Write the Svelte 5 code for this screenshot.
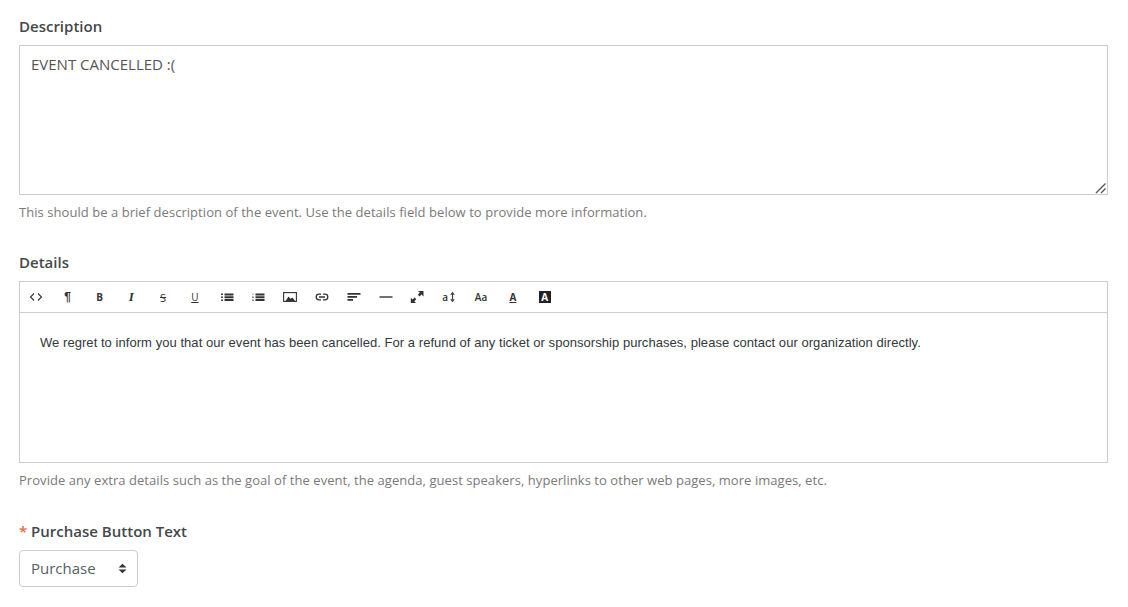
<script lang="ts">
  let description = $state('EVENT CANCELLED :(')
  let buttonText = $state('Purchase')
</script>

<div class="form">
  <section class="field first">
    <label class="label" for="description">Description</label>
    <div class="textarea-wrap">
      <textarea id="description" class="textarea" bind:value={description}></textarea>
      <svg class="grip" width="12" height="12" viewBox="0 0 12 12"><path d="M1 11 10.500 1.500M6 11 10.500 6.500" fill="none" stroke="#555" stroke-width="1.400"/></svg>
    </div>
    <p class="help">This should be a brief description of the event. Use the details field below to provide more information.</p>
  </section>

  <section class="field details">
    <div class="label">Details</div>
    <div class="editor">
      <div class="toolbar">
        <span class="tool"><svg width="14" height="14" viewBox="0 0 14 14"><path d="M5 3.500 1.500 7 5 10.500M9 3.500 12.500 7 9 10.500" fill="none" stroke="#333" stroke-width="1.100"/></svg></span>
        <span class="tool"><span class="glyph para">¶</span></span>
        <span class="tool"><span class="glyph bold">B</span></span>
        <span class="tool"><span class="glyph ital">I</span></span>
        <span class="tool"><span class="glyph strike">S</span></span>
        <span class="tool"><span class="glyph under">U</span></span>
        <span class="tool"><svg width="14" height="14" viewBox="0 0 14 14"><path d="M4.500 3.500h9v2h-9zM4.500 6.300h9v2h-9zM4.500 9.100h9v2h-9z" fill="#333"/><path d="M1 3.500h2v1.600H1zM1 6.500h2v1.600H1zM1 9.400h2V11H1z" fill="#444"/></svg></span>
        <span class="tool"><svg width="14" height="14" viewBox="0 0 14 14"><path d="M4.500 3.500h9v2h-9zM4.500 6.300h9v2h-9zM4.500 9.100h9v2h-9z" fill="#333"/><path d="M1.500 3.500h1v1.600h-1zM1 6.500h2v1.600H1zM1 9.400h2V11H1z" fill="#888"/></svg></span>
        <span class="tool"><svg width="14" height="12" viewBox="0 0 14 12"><rect x=".6" y="1.600" width="12.800" height="8.800" fill="none" stroke="#333" stroke-width="1.100"/><path d="M2.500 10 5.500 5.500l2 2.300L9.500 6.500 12 10z" fill="#333"/></svg></span>
        <span class="tool"><svg width="14" height="14" viewBox="0 0 14 14"><path d="M6 4.200H4a2.800 2.800 0 0 0 0 5.600h2M8 4.200h2a2.800 2.800 0 0 1 0 5.600H8M4 7h6" fill="none" stroke="#333" stroke-width="1.300"/></svg></span>
        <span class="tool"><svg width="14" height="14" viewBox="0 0 14 14"><path d="M.5 3h13v1.700H.5zM.5 6h9.500v1.700H.5zM.5 9h5.500v1.700H.5z" fill="#333"/></svg></span>
        <span class="tool"><svg width="14" height="14" viewBox="0 0 14 14"><path d="M.5 6.300h13v1.400H.5z" fill="#333"/></svg></span>
        <span class="tool"><svg width="14" height="14" viewBox="0 0 14 14"><path d="M8 1h5.500v5.500l-2-2-2 2L7.800 4.800l2-2zM6 13H.8V7.800l1.800 1.800 2-2 1.700 1.700-2 2z" fill="#333"/></svg></span>
        <span class="tool"><span class="glyph small">a</span><svg width="7" height="12" viewBox="0 0 7 14"><path d="M3.500 1 6.300 4.400H4.200v5.200h2.100L3.500 13 .7 9.600h2.100V4.400H.7z" fill="#444"/></svg></span>
        <span class="tool"><span class="glyph aa">Aa</span></span>
        <span class="tool"><span class="glyph under heavy">A</span></span>
        <span class="tool"><span class="glyph inverse">A</span></span>
      </div>
      <div class="content">
        <p>We regret to inform you that our event has been cancelled. For a refund of any ticket or sponsorship purchases, please contact our organization directly.</p>
      </div>
    </div>
    <p class="help">Provide any extra details such as the goal of the event, the agenda, guest speakers, hyperlinks to other web pages, more images, etc.</p>
  </section>

  <section class="field purchase">
    <label class="label" for="button-text"><span class="req">*</span> Purchase Button Text</label>
    <div class="select">
      <select id="button-text" bind:value={buttonText}>
        <option>Purchase</option>
        <option>Register</option>
      </select>
      <svg class="caret" width="9" height="11" viewBox="0 0 9 11"><path d="M4.500 .8 8.500 4.600H.5zM.5 6.400h8l-4 3.800z" fill="#363636"/></svg>
    </div>
  </section>
</div>

<style>
  :global(body) {
    background: #fff;
    font-family: "Open Sans", sans-serif;
    overflow: hidden;
  }

  .form {
    height: 607px;
    box-sizing: border-box;
    padding: 16px 20px 0 19px;
    color: #363636;
  }

  .label {
    display: block;
    font-size: 15px;
    font-weight: 600;
    line-height: 20px;
    color: #45484b;
  }

  .req { color: #e8694a; }

  .textarea-wrap {
    position: relative;
    margin-top: 9px;
  }

  .textarea {
    display: block;
    width: 100%;
    height: 150px;
    box-sizing: border-box;
    margin: 0;
    padding: 7px 11px;
    border: 1px solid #ccc;
    border-radius: 0;
    outline: none;
    resize: none;
    font: 15px/22px "Open Sans", sans-serif;
    color: #555;
  }

  .grip {
    position: absolute;
    right: 1px;
    bottom: 1px;
    pointer-events: none;
  }

  .help {
    margin: 8px 0 0;
    font-size: 13px;
    letter-spacing: 0.05px;
    line-height: 18px;
    color: #7a7a7a;
  }

  .details { margin-top: 31px; }
  .purchase { margin-top: 32px; }

  .editor {
    margin-top: 9px;
    border: 1px solid #ccc;
  }

  .editor + .help { margin-top: 8px; }

  .toolbar {
    display: flex;
    height: 30px;
    align-items: center;
    border-bottom: 1px solid #ccc;
  }

  .tool {
    display: flex;
    flex: 0 0 31.800px;
    align-items: center;
    justify-content: center;
    gap: 1px;
    height: 100%;
  }

  .glyph {
    font-size: 10px;
    line-height: 1;
    color: #333;
  }

  .para { font-size: 12px; font-weight: 700; font-family: "Liberation Sans", sans-serif; }
  .bold { font-weight: 700; }
  .ital { font: italic 700 13px "Liberation Serif", serif; }
  .strike { font-size: 11px; text-decoration: line-through; }
  .under { text-decoration: underline; }
  .heavy { font-weight: 700; }
  .small { font-size: 10px; font-weight: 600; }
  .aa { font-weight: 600; }

  .inverse {
    display: block;
    width: 12px;
    height: 12px;
    background: #222;
    color: #fff;
    font-weight: 700;
    text-align: center;
    line-height: 12px;
  }

  .content {
    height: 149px;
    box-sizing: border-box;
    padding: 20px;
  }

  .content p {
    margin: 1px 0 0;
    font: 13px/18px "Liberation Sans", sans-serif;
    letter-spacing: 0.05px;
    color: #33383b;
  }

  .select {
    position: relative;
    width: 119px;
    margin-top: 9px;
  }

  .select select {
    display: block;
    width: 100%;
    height: 37px;
    padding: 0 11px 2px;
    border: 1px solid #ccc;
    border-radius: 4px;
    outline: none;
    appearance: none;
    background: #fff;
    font: 15px "Open Sans", sans-serif;
    color: #555f63;
  }

  .caret {
    position: absolute;
    top: 13px;
    right: 11px;
    pointer-events: none;
  }
</style>
